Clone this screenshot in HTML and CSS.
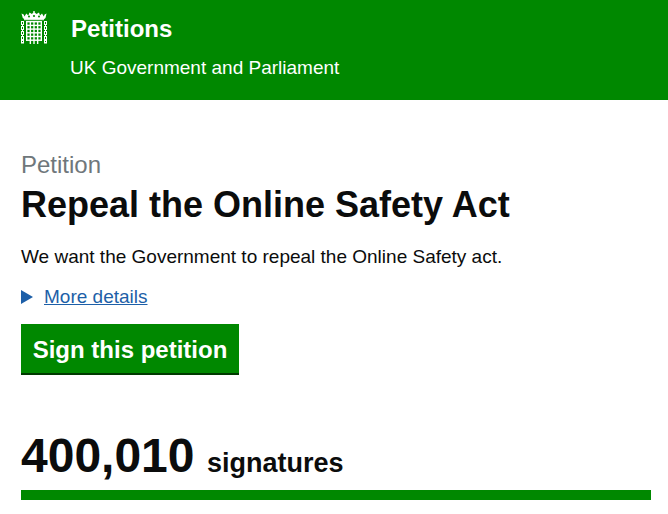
FILE: index.html
```html
<!DOCTYPE html>
<html lang="en">
<head>
<meta charset="utf-8">
<title>Repeal the Online Safety Act - Petitions</title>
<link rel="stylesheet" href="styles.css">
</head>
<body>
<header class="site-header">
  <svg class="crest" viewBox="0 0 26 33" width="26" height="33" aria-hidden="true">
    <g fill="#fff">
      <path d="M.5 2.5l2.2 1 .8 2 1.8-3 2 2 1.2-3 2.4 1.6L12.3 1.5V0h1.4v1.5L15.5 3 18 1.4l1 3 2-2 1.8 3 .8-2 1.9-1-1 4.6-1.5 1.2H3.5L1.8 7z"/>
      <rect x="3" y="8.2" width="20" height="1"/>
    </g>
    <circle cx="8" cy="5.5" r="1" fill="#008800"/>
    <circle cx="13" cy="5" r="1.1" fill="#008800"/>
    <circle cx="18" cy="5.5" r="1" fill="#008800"/>
    <g fill="#fff">
      <rect x="5" y="10" width="16" height="1.4"/><rect x="5" y="13.7" width="16" height="1.4"/>
      <rect x="5" y="17.4" width="16" height="1.4"/><rect x="5" y="21.1" width="16" height="1.4"/>
      <rect x="5" y="24.8" width="16" height="1.4"/><rect x="5" y="28.5" width="16" height="1.4"/>
      <rect x="5" y="10" width="1.4" height="20"/><rect x="8.65" y="10" width="1.4" height="23"/>
      <rect x="12.3" y="10" width="1.4" height="23"/><rect x="15.95" y="10" width="1.4" height="23"/>
      <rect x="19.6" y="10" width="1.4" height="20"/>
    </g>
    <g fill="none" stroke="#fff" stroke-width="1">
      <rect x=".5" y="10.5" width="2" height="3"/><rect x=".5" y="15.5" width="2" height="3"/>
      <rect x=".5" y="20.5" width="2" height="3"/><rect x=".5" y="25.5" width="2" height="3"/>
      <rect x=".5" y="29.5" width="2" height="2.5"/>
      <rect x="23.5" y="10.5" width="2" height="3"/><rect x="23.5" y="15.5" width="2" height="3"/>
      <rect x="23.5" y="20.5" width="2" height="3"/><rect x="23.5" y="25.5" width="2" height="3"/>
      <rect x="23.5" y="29.5" width="2" height="2.5"/>
    </g>
    <g fill="#fff">
      <rect x="1" y="13.5" width="1" height="2"/><rect x="1" y="18.5" width="1" height="2"/>
      <rect x="1" y="23.5" width="1" height="2"/><rect x="24" y="13.5" width="1" height="2"/>
      <rect x="24" y="18.5" width="1" height="2"/><rect x="24" y="23.5" width="1" height="2"/>
    </g>
  </svg>
  <div class="brand">
    <div class="brand-title">Petitions</div>
    <div class="brand-sub">UK Government and Parliament</div>
  </div>
</header>
<main class="content">
  <div class="eyebrow">Petition</div>
  <h1 class="title">Repeal the Online Safety Act</h1>
  <p class="lede">We want the Government to repeal the Online Safety act.</p>
  <div class="details">
    <span class="arrow"></span>
    <a class="details-link" href="#">More details</a>
  </div>
  <a class="button" href="#">Sign this petition</a>
  <div class="count"><span class="count-num">400,010</span> <span class="count-label">signatures</span></div>
  <div class="progress"></div>
</main>
</body>
</html>
```
FILE: styles.css
```css
* { box-sizing: border-box; }
html, body { margin: 0; padding: 0; }
body {
  background: #fff;
  color: #0b0c0c;
  font-family: "Liberation Sans", Arial, sans-serif;
  overflow: hidden;
}
.site-header {
  background: #008800;
  color: #fff;
  height: 100px;
  display: flex;
  padding: 11px 0 0 21px;
}
.crest { flex: none; display: block; }
.brand { margin-left: 24px; }
.brand-title { font-size: 24px; font-weight: 700; line-height: 28px; margin-top: 4px; }
.brand-sub { font-size: 19px; line-height: 24px; margin-top: 13px; margin-left: -1px; }
.content { padding: 51px 17px 0 21px; }
.eyebrow { color: #6f777b; font-size: 24px; line-height: 28px; }
.title { font-size: 36px; font-weight: 700; line-height: 40px; margin: 6px 0 0; }
.lede { font-size: 19px; line-height: 24px; margin: 20px 0 0; }
.details { display: flex; align-items: center; margin-top: 16px; height: 24px; }
.arrow {
  width: 0; height: 0;
  border-left: 12px solid #1d5fa8;
  border-top: 7px solid transparent;
  border-bottom: 7px solid transparent;
}
.details-link { color: #1d5fa8; font-size: 19px; line-height: 24px; margin-left: 11px; text-decoration: underline; }
.button {
  display: block;
  width: 218px;
  height: 51px;
  margin-top: 15px;
  background: #008800;
  border-bottom: 2px solid #003a00;
  color: #fff;
  font-size: 24px;
  font-weight: 700;
  line-height: 51px;
  text-align: center;
  text-decoration: none;
}
.count { margin-top: 51px; line-height: 60px; height: 64px; white-space: nowrap; }
.count-num { font-size: 48px; font-weight: 700; }
.count-label { font-size: 27px; font-weight: 700; margin-left: 8px; }
.progress { height: 10px; background: #008800; }
```
